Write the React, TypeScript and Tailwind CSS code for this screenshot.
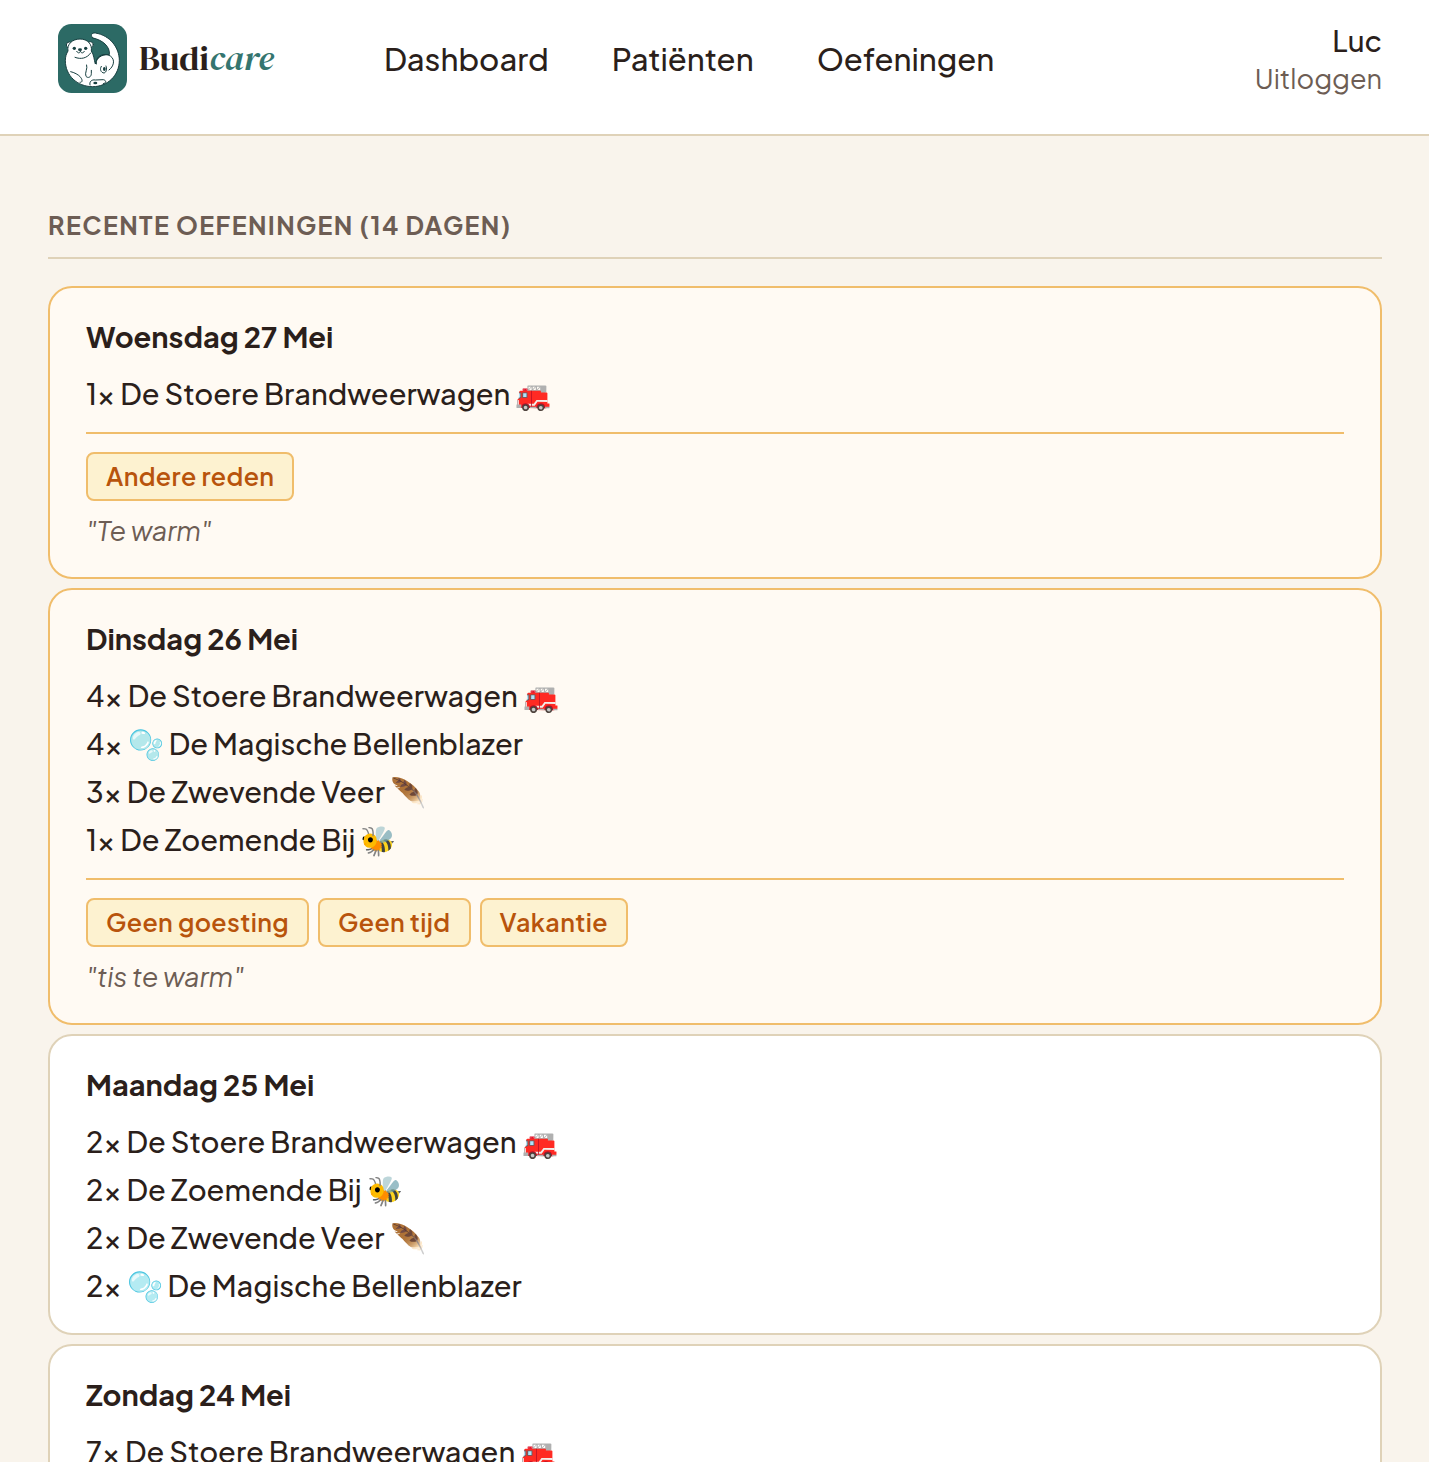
type Exercise = { count: number; name: string };

type Day = {
  date: string;
  exercises: Exercise[];
  reasons?: string[];
  note?: string;
};

const TRUCK = "De Stoere Brandweerwagen 🚒";
const BUBBLES = "🫧 De Magische Bellenblazer";
const FEATHER = "De Zwevende Veer 🪶";
const BEE = "De Zoemende Bij 🐝";

const navItems = ["Dashboard", "Patiënten", "Oefeningen"];

const days: Day[] = [
  {
    date: "Woensdag 27 Mei",
    exercises: [{ count: 1, name: TRUCK }],
    reasons: ["Andere reden"],
    note: "Te warm",
  },
  {
    date: "Dinsdag 26 Mei",
    exercises: [
      { count: 4, name: TRUCK },
      { count: 4, name: BUBBLES },
      { count: 3, name: FEATHER },
      { count: 1, name: BEE },
    ],
    reasons: ["Geen goesting", "Geen tijd", "Vakantie"],
    note: "tis te warm",
  },
  {
    date: "Maandag 25 Mei",
    exercises: [
      { count: 2, name: TRUCK },
      { count: 2, name: BEE },
      { count: 2, name: FEATHER },
      { count: 2, name: BUBBLES },
    ],
  },
  {
    date: "Zondag 24 Mei",
    exercises: [{ count: 7, name: TRUCK }],
  },
];

function OtterLogo() {
  return (
    <svg viewBox="9 12 207 207" className="size-[69px] shrink-0" aria-hidden="true">
      <rect x="9" y="12" width="207" height="207" rx="40" fill="#2c6a65" />
      <g stroke="#173f40" strokeWidth="3" strokeLinecap="round" strokeLinejoin="round">
        <circle cx="43" cy="75" r="9" fill="#fff" />
        <circle cx="106" cy="74" r="9" fill="#fff" />
        <path
          d="M114 54C105 48 109 37 121 39C166 46 193 84 193 121C193 166 158 200 113 200C66 200 31 166 31 122C31 110 34 101 39 93C35 73 52 57 75 57C98 57 112 73 109 93C117 104 117 119 121 132C126 113 138 103 163 104C166 80 143 60 114 54Z"
          fill="#fff"
        />
        <g fill="none">
          <path d="M60 112C78 119 96 115 107 99" />
          <path d="M124 132C119 108 148 96 166 108C182 119 176 140 162 150" />
          <path d="M139 139C133 148 138 158 147 159C155 157 156 146 153 138" />
          <path d="M95 135C99 145 88 160 93 169C99 176 109 171 109 161V151" />
          <path d="M47 155C57 157 71 164 77 172C83 180 83 188 75 187" />
          <path d="M105 195C102 185 110 178 121 180L145 179C155 181 154 190 145 191" />
          <path d="M65 94C70 102 76 99 76 92C77 99 84 102 88 94" />
        </g>
      </g>
      <g fill="#173f40">
        <circle cx="58" cy="85" r="5" />
        <circle cx="92" cy="85" r="5" />
        <ellipse cx="75" cy="89" rx="6" ry="4" />
        <ellipse cx="148" cy="147" rx="4" ry="6" />
        <ellipse cx="121" cy="189" rx="6" ry="4" />
      </g>
    </svg>
  );
}

function Header() {
  return (
    <header className="flex items-start border-b-2 border-[#dfd2b8] bg-white pt-[21px] pr-[47px] pb-[37px] pl-12">
      <a href="#" className="flex h-[75px] w-[336px] shrink-0 items-center gap-3 pl-2.5">
        <OtterLogo />
        <span className="font-['DM_Serif_Display','Playfair_Display','Liberation_Serif',serif] text-[35px] text-[#2b1f1b]">
          Budi<em className="text-[#34756f]">care</em>
        </span>
      </a>
      <nav className="flex h-[76px] items-center gap-[63px] text-[31px] font-medium">
        {navItems.map((item) => (
          <a key={item} href="#">
            {item}
          </a>
        ))}
      </nav>
      <div className="ml-auto flex flex-col items-end leading-[38px]">
        <span className="text-[29px] font-medium">Luc</span>
        <button type="button" className="text-[27px] text-[#6d5d54]">
          Uitloggen
        </button>
      </div>
    </header>
  );
}

function DayCard({ day }: { day: Day }) {
  return (
    <article
      className={
        day.reasons
          ? "rounded-3xl border-2 border-[#f0bd6b] bg-[#fffaf3] px-9 py-6"
          : "rounded-3xl border-2 border-[#dfd2b8] bg-white px-9 py-6"
      }
    >
      <h3 className="text-[29px] leading-[48px] font-bold">{day.date}</h3>
      <ul className="mt-[9px] text-[29px] leading-[48px] font-medium">
        {day.exercises.map((exercise) => (
          <li key={exercise.name} className="h-12">
            {exercise.count}× {exercise.name}
          </li>
        ))}
      </ul>
      {day.reasons && (
        <div className="mt-[15px] border-t-2 border-[#f0bd6b] pt-[18px]">
          <div className="flex flex-wrap gap-[9px]">
            {day.reasons.map((reason) => (
              <span
                key={reason}
                className="rounded-lg border-2 border-[#f0bd6b] bg-[#fdf2d0] px-[18px] text-[25px] leading-[45px] font-semibold tracking-[0.015em] text-[#b8540c]"
              >
                {reason}
              </span>
            ))}
          </div>
          <p className="mt-1.5 text-[27px] leading-[46px] text-[#6d5d54] italic">"{day.note}"</p>
        </div>
      )}
    </article>
  );
}

export default function App() {
  return (
    <div className="min-h-screen bg-[#f9f4ec] font-['Plus_Jakarta_Sans',Inter,sans-serif] text-[#2b1f1b]">
      <Header />
      <main className="pt-[70px] pr-[47px] pl-12">
        <h2 className="border-b-2 border-[#dfd2b8] pb-[13px] text-[25px] leading-[38px] font-bold tracking-[0.055em] text-[#6d5d54] uppercase">
          Recente oefeningen (14 dagen)
        </h2>
        <div className="mt-[27px] flex flex-col gap-[9px]">
          {days.map((day) => (
            <DayCard key={day.date} day={day} />
          ))}
        </div>
      </main>
    </div>
  );
}
